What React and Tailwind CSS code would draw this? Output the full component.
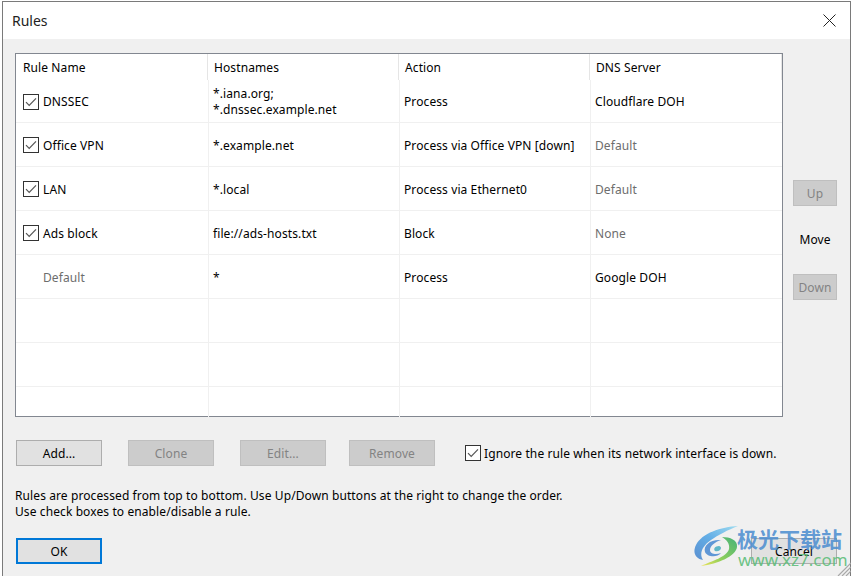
import React from 'react';

const rules = [
  { name: 'DNSSEC', check: true, hosts: ['*.iana.org;', '*.dnssec.example.net'], action: 'Process', dns: 'Cloudflare DOH' },
  { name: 'Office VPN', check: true, hosts: ['*.example.net'], action: 'Process via Office VPN [down]', dns: 'Default', dnsMuted: true },
  { name: 'LAN', check: true, hosts: ['*.local'], action: 'Process via Ethernet0', dns: 'Default', dnsMuted: true },
  { name: 'Ads block', check: true, hosts: ['file://ads-hosts.txt'], action: 'Block', dns: 'None', dnsMuted: true },
  { name: 'Default', check: false, hosts: ['*'], action: 'Process', dns: 'Google DOH' },
  { empty: true },
  { empty: true },
  { empty: true },
];

function CheckBox() {
  return (
    <svg width="16" height="16" viewBox="0 0 16 16" className="shrink-0">
      <rect x="0.5" y="0.5" width="15" height="15" fill="#fff" stroke="#333" />
      <path d="M3 8.2 L6.2 11.4 L13 4.4" fill="none" stroke="#555" strokeWidth="1.2" />
    </svg>
  );
}

function Btn({ children, disabled, primary, className = '' }) {
  let look = 'bg-[#e1e1e1] border border-[#adadad] text-black';
  if (disabled) look = 'bg-[#cccccc] border border-[#bfbfbf] text-[#838383]';
  if (primary) look = 'bg-[#e1e1e1] border-2 border-[#0078d7] text-black';
  return (
    <div className={`h-[26px] pt-[1px] flex items-center justify-center ${look} ${className}`}>{children}</div>
  );
}

function Row({ rule, last }) {
  const twoLine = rule.hosts?.length === 2;
  const cell = `flex flex-col justify-center pl-[4px] ${twoLine ? 'pt-[1px]' : 'pt-[2px]'} border-r border-[#f0f0f0] leading-[16px]`;
  return (
    <div className={`grid grid-cols-[193px_191px_191px_190px] ${twoLine ? 'h-[43px]' : 'h-[44px]'} ${last ? '' : 'border-b border-[#f0f0f0]'}`}>
      <div className="flex items-center pl-[7px] pt-[1px] gap-[4px] border-r border-[#f0f0f0]">
        {rule.empty ? null : rule.check ? <CheckBox /> : <div className="w-[16px]" />}
        <span className={`${twoLine ? '' : 'pt-[2px]'} ${rule.check ? '' : 'text-[#6d6d6d]'}`}>{rule.name}</span>
      </div>
      <div className={cell}>
        {rule.hosts?.map((h) => <div key={h}>{h}</div>)}
      </div>
      <div className={cell}>{rule.action}</div>
      <div className={`${cell} border-r-0 ${rule.dnsMuted ? 'text-[#6d6d6d]' : ''}`}>{rule.dns}</div>
    </div>
  );
}

export default function App() {
  return (
    <div className="w-[853px] h-[576px] bg-white overflow-hidden pl-[2px] pr-[2px] pt-[1px] text-[12px] text-black relative font-['Noto_Sans','DejaVu_Sans',sans-serif] tracking-[0.1px]">
      <div className="h-[600px] border border-[#7a7a7a] bg-[#f0f0f0]">
        <div className="h-[37px] bg-white flex items-center justify-between pl-[9px] pr-[14px]">
          <span className="text-[14px] text-[#222] tracking-normal">Rules</span>
          <svg width="13" height="13" viewBox="0 0 13 13">
            <path d="M0.5 0.5 L12.5 12.5 M12.5 0.5 L0.5 12.5" stroke="#222" strokeWidth="1" fill="none" />
          </svg>
        </div>

        <div className="pl-[12px] pr-[13px] pt-[14px]">
          <div className="flex">
            <div className="w-[768px] h-[364px] border border-[#828790] bg-white">
              <div className="grid grid-cols-[192px_191px_191px_192px] h-[26px]">
                {['Rule Name', 'Hostnames', 'Action', 'DNS Server'].map((t, i) => (
                  <div key={t} className={`flex items-center pt-[2px] border-r border-[#e5e5e5] ${i === 0 ? 'pl-[7px]' : 'pl-[6px]'}`}>{t}</div>
                ))}
              </div>
              {rules.map((r, i) => <Row key={i} rule={r} last={i === rules.length - 1} />)}
            </div>
            <div className="flex-1 flex flex-col items-end pr-0 pt-[127px]">
              <div className="w-[44px] flex flex-col items-center">
                <Btn disabled className="w-full">Up</Btn>
                <div className="h-[68px] flex items-center">Move</div>
                <Btn disabled className="w-full">Down</Btn>
              </div>
            </div>
          </div>

          <div className="flex items-center mt-[23px] ml-[1px]">
            <Btn className="w-[86px]">Add...</Btn>
            <Btn disabled className="w-[86px] ml-[26px]">Clone</Btn>
            <Btn disabled className="w-[86px] ml-[26px]">Edit...</Btn>
            <Btn disabled className="w-[86px] ml-[23px]">Remove</Btn>
            <div className="flex items-center ml-[30px] gap-[3px]">
              <CheckBox />
              <span className="pt-[2px]">Ignore the rule when its network interface is down.</span>
            </div>
          </div>

          <div className="mt-[22px] leading-[16px]">
            <div>Rules are processed from top to bottom. Use Up/Down buttons at the right to change the order.</div>
            <div>Use check boxes to enable/disable a rule.</div>
          </div>

          <div className="flex justify-between mt-[18px] ml-[1px]">
            <Btn primary className="w-[86px]">OK</Btn>
            <Btn className="w-[86px]">Cancel</Btn>
          </div>
        </div>
      </div>

      {/* watermark over the corner */}
      <div className="absolute left-[694px] top-[526px] w-[159px] h-[50px] pointer-events-none">
        <svg width="44" height="40" viewBox="0 0 44 40" className="absolute left-0 top-0">
          <defs>
            <linearGradient id="wmBlue" x1="1" y1="0" x2="0" y2="1">
              <stop offset="0" stopColor="#9fdcf0" />
              <stop offset="0.5" stopColor="#63aee6" />
              <stop offset="1" stopColor="#5a8fd0" />
            </linearGradient>
            <linearGradient id="wmGreen" x1="1" y1="0" x2="0" y2="1">
              <stop offset="0" stopColor="#45b27a" />
              <stop offset="0.6" stopColor="#8fcf5a" />
              <stop offset="1" stopColor="#efe35a" />
            </linearGradient>
          </defs>
          <path d="M44 0 C27 1 8 7 2 19 C-2 27 2 33 9 34 C5 28 8 20 17 14 C24 9 34 4 44 0Z" fill="url(#wmBlue)" />
          <path d="M27 14 C17 13 9 19 11 26 C13 31 23 32 27 27 C22 29 16 28 16 24 C16 20 21 16 27 14Z" fill="#5f97d6" />
          <path d="M25 20 C21 20 19 23 21 25 C24 26 27 24 27 22 C27 21 26 20 25 20Z" fill="#5fb7c8" />
          <path d="M28 11 C36 11 44 14 43 21 C42 30 24 38 7 40 C18 35 33 31 35 23 C36 18 33 14 28 11Z" fill="url(#wmGreen)" />
        </svg>
        <div className="absolute left-[43px] top-[-2px] text-[21px] leading-[28px] font-bold tracking-normal text-[#4f8fd0]/90 font-['Noto_Sans_CJK_SC',sans-serif] whitespace-nowrap">极光下载站</div>
        <div className="absolute left-[44px] top-[25px] text-[17px] leading-[18px] tracking-normal text-[#5cbd78]/90 font-['Noto_Sans',sans-serif] whitespace-nowrap">www.xz7.com</div>
      </div>
      <svg width="14" height="14" viewBox="0 0 14 14" className="absolute right-[2px] bottom-0">
        <path d="M14 1 L1 14 M14 5 L5 14 M14 9 L9 14" stroke="#a8a8a8" strokeWidth="1.2" fill="none" />
      </svg>
    </div>
  );
}
